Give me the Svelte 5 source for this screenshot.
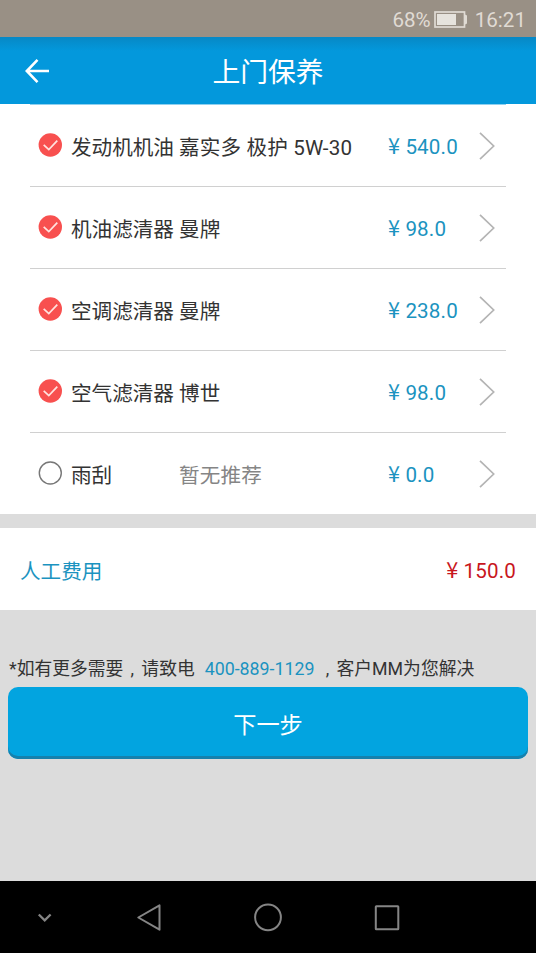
<script>
    let items = [
        { name: '发动机机油', detail: '嘉实多 极护 5W-30', price: '540.0', checked: true },
        { name: '机油滤清器', detail: '曼牌', price: '98.0', checked: true },
        { name: '空调滤清器', detail: '曼牌', price: '238.0', checked: true },
        { name: '空气滤清器', detail: '博世', price: '98.0', checked: true },
        { name: '雨刮', detail: '', price: '0.0', checked: false }
    ];

    const toggle = (item) => {
        item.checked = !item.checked;
        items = items;
    }
</script>

<main>
    <div class="status">
        <span>68%</span>
        <svg class="battery" width="34" height="18" viewBox="0 0 34 18">
            <rect x="1" y="1" width="29.5" height="15" fill="none" stroke="#e0dbd4" stroke-width="1.7" />
            <rect x="3" y="3" width="19" height="11" fill="#e6e3dd" />
            <path d="M31 3.5 L33 4.5 V12.5 L31 13.5 Z" fill="#e0dbd4" />
        </svg>
        <span class="time">16:21</span>
    </div>

    <header>
        <button class="back" aria-label="返回">
            <svg width="26" height="26" viewBox="0 0 26 26">
                <path d="M14.5 1.8 L3.8 13 L14.5 24.2 M3.8 13 H26" fill="none" stroke="#fff" stroke-width="2.6" />
            </svg>
        </button>
        <h1>上门保养</h1>
    </header>

    <ul>
        {#each items as item}
            <li>
                <button class="check" aria-label={item.name} on:click={() => toggle(item)}>
                    <svg width="24" height="24" viewBox="0 0 24 24">
                        {#if item.checked}
                            <circle cx="12.3" cy="12" r="11.7" fill="#f8504f" />
                            <path d="M5.7 11.8 L10.8 16.6 L19.3 7.6" fill="none" stroke="#ffe3df" stroke-width="1.7" />
                        {:else}
                            <circle cx="12.3" cy="12" r="11" fill="none" stroke="#777" stroke-width="1.4" />
                        {/if}
                    </svg>
                </button>
                <span class="name">{item.name}</span>
                <span class="detail" class:empty={!item.detail}>{item.detail || '暂无推荐'}</span>
                <span class="price"><span class="yen">¥</span>{item.price}</span>
                <svg class="arrow" width="17" height="30" viewBox="0 0 17 30">
                    <path d="M1 1.8 L14.7 15 L1 28.2" fill="none" stroke="#b4b4b4" stroke-width="1.7" />
                </svg>
            </li>
        {/each}
    </ul>

    <section class="labour">
        <span>人工费用</span>
        <span class="cost"><span class="yen">¥</span>150.0</span>
    </section>

    <section class="bottom">
        <p>*如有更多需要<span class="comma">,</span>请致电<a href="tel:400-889-1129">400-889-1129</a><span class="comma">,</span>客户MM为您解决</p>
        <button class="next">下一步</button>
    </section>

    <nav>
        <svg width="536" height="72" viewBox="0 0 536 72" fill="none" stroke="#858585" stroke-width="2">
            <path d="M38.8 33.5 L44.7 39.3 L50.6 33.5" stroke-width="2.3" />
            <path d="M159.5 24.3 V48.7 L138.3 36.5 Z" stroke-linejoin="round" />
            <circle cx="268" cy="36.3" r="12.9" />
            <rect x="375.8" y="25.3" width="22.5" height="23" rx="0.5" />
        </svg>
    </nav>
</main>

<style>
    :global(body) {
        margin: 0;
    }
    main {
        width: 536px;
        height: 953px;
        display: flex;
        flex-direction: column;
        overflow: hidden;
        background: #dcdcdc;
        color: #333;
        font-family: Roboto, "Noto Sans CJK SC", sans-serif;
        font-size: 20.6px;
    }
    button {
        padding: 0;
        border: 0;
        background: none;
        color: inherit;
        font: inherit;
    }
    svg {
        display: block;
        flex-shrink: 0;
    }
    .status {
        height: 37px;
        box-sizing: border-box;
        padding: 2px 10px 0 0;
        display: flex;
        align-items: center;
        justify-content: flex-end;
        background: #999085;
        color: #e0dbd4;
        font-size: 20.6px;
    }
    .battery {
        margin: 0 7px 0 3px;
    }
    header {
        height: 67px;
        display: grid;
        grid-template-columns: 60px 1fr 60px;
        align-items: center;
        background: linear-gradient(#0788c5, #0398dc 14px);
        color: #fff;
    }
    .back {
        margin-left: 23px;
        width: 26px;
    }
    h1 {
        margin: 0;
        padding-top: 4px;
        text-align: center;
        font-size: 27.8px;
        font-weight: 400;
        line-height: 40px;
    }
    ul {
        height: 410px;
        margin: 0;
        padding: 0 30px;
        list-style: none;
        background: #fff;
    }
    li {
        height: 82px;
        box-sizing: border-box;
        padding: 1px 0 0 8px;
        border-top: 1px solid #d0d0d0;
        display: flex;
        align-items: center;
    }
    li:first-child {
        border-top-color: #8fd0ef;
    }
    .check {
        width: 24px;
        margin-right: 9px;
    }
    .check svg {
        position: relative;
        top: -1px;
    }
    .name {
        width: 108px;
    }
    .detail {
        width: 209px;
        letter-spacing: 0.16px;
        white-space: nowrap;
    }
    .empty {
        color: #858585;
    }
    .price {
        width: 91px;
        padding-top: 1px;
        color: #1b93c0;
        letter-spacing: 0.15px;
    }
    .yen {
        display: inline-block;
        width: 17.4px;
        font-family: "Noto Sans CJK SC", sans-serif;
        font-size: 21.6px;
        line-height: 1;
    }
    .labour {
        height: 82px;
        margin-top: 14px;
        padding: 2px 20px 0;
        box-sizing: border-box;
        display: flex;
        align-items: center;
        justify-content: space-between;
        background: #fff;
        color: #1b93c0;
    }
    .cost {
        padding-top: 1px;
        color: #c8161d;
        letter-spacing: 0.15px;
    }
    .bottom {
        flex: 1;
        padding: 46px 8px 0;
    }
    p {
        height: 31px;
        margin: 0;
        padding-left: 1px;
        font-size: 17.8px;
        line-height: 26px;
        white-space: nowrap;
    }
    .comma {
        display: inline-block;
        width: 18px;
        text-align: center;
    }
    a {
        margin: 0 4px 0 10px;
        color: #1b93c0;
        text-decoration: none;
    }
    .next {
        width: 520px;
        height: 72px;
        border-radius: 10px;
        background: #02a4e0;
        box-shadow: inset 0 -3px #1681ad;
        color: #fff;
        font-size: 23.2px;
    }
    nav {
        height: 72px;
        background: #000;
    }
</style>
